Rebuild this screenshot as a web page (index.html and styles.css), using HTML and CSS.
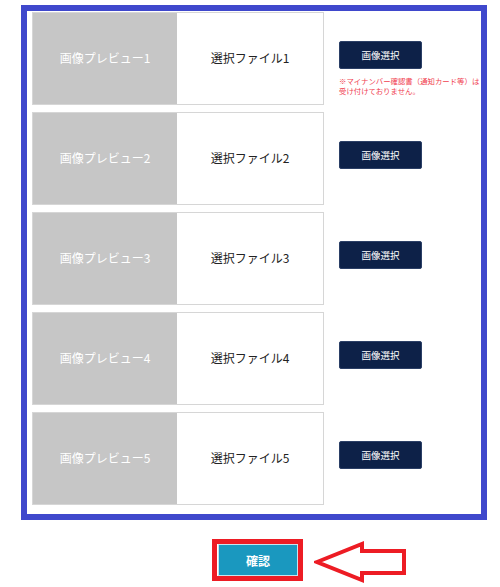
FILE: index.html
```html
<!DOCTYPE html>
<html lang="ja">
<head>
  <meta charset="UTF-8">
  <link rel="stylesheet" href="styles.css">
</head>
<body>
  <div class="upload-frame">
    <div class="upload-row">
      <div class="upload-card">
        <div class="preview">画像プレビュー1</div>
        <div class="file-name">選択ファイル1</div>
      </div>
      <div class="actions">
        <button class="select-btn">画像選択</button>
        <p class="note">※マイナンバー確認書（通知カード等）は<br>受け付けておりません。</p>
      </div>
    </div>
    <div class="upload-row">
      <div class="upload-card">
        <div class="preview">画像プレビュー2</div>
        <div class="file-name">選択ファイル2</div>
      </div>
      <div class="actions">
        <button class="select-btn">画像選択</button>
      </div>
    </div>
    <div class="upload-row">
      <div class="upload-card">
        <div class="preview">画像プレビュー3</div>
        <div class="file-name">選択ファイル3</div>
      </div>
      <div class="actions">
        <button class="select-btn">画像選択</button>
      </div>
    </div>
    <div class="upload-row">
      <div class="upload-card">
        <div class="preview">画像プレビュー4</div>
        <div class="file-name">選択ファイル4</div>
      </div>
      <div class="actions">
        <button class="select-btn">画像選択</button>
      </div>
    </div>
    <div class="upload-row">
      <div class="upload-card">
        <div class="preview">画像プレビュー5</div>
        <div class="file-name">選択ファイル5</div>
      </div>
      <div class="actions">
        <button class="select-btn">画像選択</button>
      </div>
    </div>
  </div>

  <div class="submit-area">
    <div class="submit-mark">
      <button class="submit-btn">確認</button>
    </div>
    <svg class="pointer" width="94" height="42" viewBox="0 0 94 42">
      <polygon points="3,21 48,3 48,10 90,10 90,32 48,32 48,39" fill="#fff" stroke="#ed1c24" stroke-width="4" stroke-linejoin="miter"/>
    </svg>
  </div>
</body>
</html>
```

FILE: styles.css
```css
body {
  margin: 0;
  background: #fff;
  font-family: "Noto Sans CJK JP", "Noto Sans", sans-serif;
  color: #333;
}

.upload-frame {
  width: 466px;
  height: 515px;
  box-sizing: border-box;
  margin: 5px 0 0 21px;
  border: 6px solid #3f48cc;
  padding: 1px 0 0 5px;
  display: flex;
  flex-direction: column;
  gap: 7px;
}

.upload-row {
  display: flex;
  height: 93px;
}

.upload-card {
  width: 292px;
  display: flex;
  border: 1px solid #d6d6d6;
  box-sizing: border-box;
}

.preview {
  width: 144px;
  background: #c6c6c6;
  color: #fff;
  font-size: 12px;
  display: flex;
  align-items: center;
  justify-content: center;
  padding-bottom: 2px;
  box-sizing: border-box;
}

.file-name {
  flex: 1;
  background: #fff;
  font-size: 12px;
  color: #222;
  display: flex;
  align-items: center;
  justify-content: center;
  padding-bottom: 2px;
}

.actions {
  margin-left: 15px;
  padding-top: 29px;
}

.select-btn {
  display: block;
  width: 83px;
  height: 28px;
  padding: 0;
  border: 1px solid #2b3f66;
  border-radius: 2px;
  background: #0d2148;
  color: #fff;
  font-family: inherit;
  font-size: 9.5px;
}

.note {
  margin: 7px 0 0;
  font-size: 7.4px;
  line-height: 10px;
  color: #f0404f;
  white-space: nowrap;
}

.submit-area {
  display: flex;
  align-items: center;
  margin: 17px 0 0 212px;
}

.submit-mark {
  border: 5px solid #ed1c24;
  width: 81px;
  height: 32px;
}

.submit-btn {
  display: block;
  width: 80px;
  height: 32px;
  margin-left: 1px;
  padding: 0;
  border: 1px solid #c5e4ee;
  border-radius: 1px;
  background: #1a98bf;
  color: #fff;
  font-family: inherit;
  font-size: 12px;
  font-weight: bold;
}

.pointer {
  margin: 4px 0 0 11px;
}
```
